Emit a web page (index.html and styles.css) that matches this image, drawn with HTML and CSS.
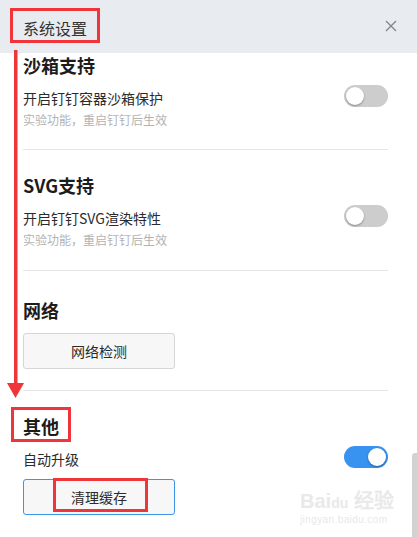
FILE: index.html
```html
<!DOCTYPE html>
<html lang="zh-CN">
  <head>
    <meta charset="UTF-8" />
    <meta name="viewport" content="width=device-width, initial-scale=1.0" />
    <title>系统设置</title>
    <link rel="stylesheet" href="styles.css">
  </head>

  <body>
    <div id="dialog">
      <div class="dialog_header">
        <span class="dialog_title">系统设置</span>
        <svg class="dialog_close" width="12" height="12" viewBox="0 0 12 12">
          <path d="M1 1 L11 11 M11 1 L1 11" stroke="#7d8288" stroke-width="1.2" fill="none" />
        </svg>
      </div>

      <div class="dialog_body">
        <div class="dialog_scroll">
          <div class="section --first">
            <h2 class="section_title">沙箱支持</h2>
            <div class="setting_row">
              <span>开启钉钉容器沙箱保护</span>
              <span class="switch"></span>
            </div>
            <p class="setting_note">实验功能，重启钉钉后生效</p>
          </div>

          <div class="section">
            <h2 class="section_title">SVG支持</h2>
            <div class="setting_row">
              <span>开启钉钉SVG渲染特性</span>
              <span class="switch"></span>
            </div>
            <p class="setting_note">实验功能，重启钉钉后生效</p>
          </div>

          <div class="section --network">
            <h2 class="section_title">网络</h2>
            <button class="button" type="button">网络检测</button>
          </div>

          <div class="section --last">
            <h2 class="section_title">其他</h2>
            <div class="setting_row">
              <span>自动升级</span>
              <span class="switch --on"></span>
            </div>
            <button class="button --focus" type="button">清理缓存</button>
          </div>
        </div>
        <div class="scrollbar"></div>
      </div>

      <!-- annotations drawn on top of the screenshot -->
      <div class="mark --title"></div>
      <div class="mark --other"></div>
      <div class="mark --clear"></div>
      <svg class="arrow" width="30" height="360" viewBox="0 0 30 360">
        <rect x="14" y="0" width="3.5" height="336" fill="#f0353a" />
        <polygon points="7,333 24,333 15.5,348" fill="#f0353a" />
      </svg>

      <div class="watermark">
        <div class="watermark_logo">Bai<span>du</span> 经验</div>
        <div class="watermark_url">jingyan.baidu.com</div>
      </div>
    </div>
  </body>
</html>
```

FILE: styles.css
```css
* {
  box-sizing: border-box;
  margin: 0px;
  padding: 0px;
}

body {
  background-color: #ffffff;
  font-family: "Noto Sans CJK SC", "Noto Sans", sans-serif;
  color: #2b2b2b;
}

#dialog {
  position: relative;
  width: 417px;
  height: 537px;
  overflow: hidden;
  display: flex;
  flex-direction: column;
}

.dialog_header {
  background-color: #e8ebf0;
  height: 53px;
  flex-shrink: 0;
  display: flex;
  align-items: center;
  justify-content: space-between;
  padding: 0 20px 0 23px;
  position: relative;
  z-index: 1;
}

.dialog_title {
  font-size: 16px;
  line-height: 22px;
  color: #333333;
  margin-top: 3px;
}

.dialog_close {
  margin-bottom: 1px;
}

.dialog_body {
  flex: 1;
  overflow: hidden;
  position: relative;
}

.dialog_scroll {
  padding-left: 23px;
  padding-right: 29px;
}

.section {
  padding: 23px 0 21px;
  border-bottom: 1px solid #e6e6e6;
}

/* first block is scrolled up under the header */
.section.--first {
  padding-top: 0;
  padding-bottom: 20px;
}

.section.--network {
  padding-top: 27px;
}

.section.--last {
  border-bottom: none;
}

.section_title {
  font-size: 18px;
  font-weight: bold;
  line-height: 24px;
  color: #1c1c1c;
  margin-bottom: 8px;
}

.setting_row {
  display: flex;
  align-items: center;
  justify-content: space-between;
  height: 22px;
  font-size: 14px;
  color: #2b2b2b;
}

.setting_row span:first-child {
  margin-top: 3px;
}

.setting_note {
  font-size: 12px;
  line-height: 18px;
  color: #b3b3b3;
  margin-top: 4px;
}

.switch {
  position: relative;
  width: 44px;
  height: 22px;
  border-radius: 11px;
  background-color: #cdcdcd;
}

.switch::after {
  content: "";
  position: absolute;
  top: 2px;
  left: 2px;
  width: 18px;
  height: 18px;
  border-radius: 50%;
  background-color: #ffffff;
  box-shadow: 0 1px 2px rgba(0, 0, 0, 0.35);
}

.switch.--on {
  background-color: #3892f0;
}

.switch.--on::after {
  left: 24px;
}

.button {
  display: block;
  width: 152px;
  height: 36px;
  margin-top: 11px;
  background-color: #f7f7f7;
  border: 1px solid #d6d6d6;
  border-radius: 3px;
  font-family: inherit;
  font-size: 14px;
  color: #2b2b2b;
}

.button.--focus {
  border-color: #3c95e6;
}

.scrollbar {
  position: absolute;
  right: 0;
  bottom: 0;
  width: 5px;
  height: 84px;
  background-color: #d2d2d2;
  border-radius: 3px 0 0 0;
}

.mark {
  position: absolute;
  border: 3px solid #f0353a;
  z-index: 2;
}

.mark.--title {
  left: 10px;
  top: 8px;
  width: 90px;
  height: 35px;
}

.mark.--other {
  left: 11px;
  top: 407px;
  width: 60px;
  height: 35px;
}

.mark.--clear {
  left: 53px;
  top: 478px;
  width: 95px;
  height: 34px;
}

.arrow {
  position: absolute;
  left: 0;
  top: 50px;
  z-index: 2;
}

.watermark {
  position: absolute;
  left: 300px;
  top: 490px;
  color: #e9e9e9;
  font-family: "Liberation Sans", sans-serif;
  z-index: 2;
}

.watermark_logo {
  font-size: 20px;
  font-weight: bold;
  line-height: 22px;
}

.watermark_logo span {
  font-size: 14px;
}

.watermark_url {
  font-size: 10px;
  line-height: 12px;
  letter-spacing: 0.4px;
}
```
